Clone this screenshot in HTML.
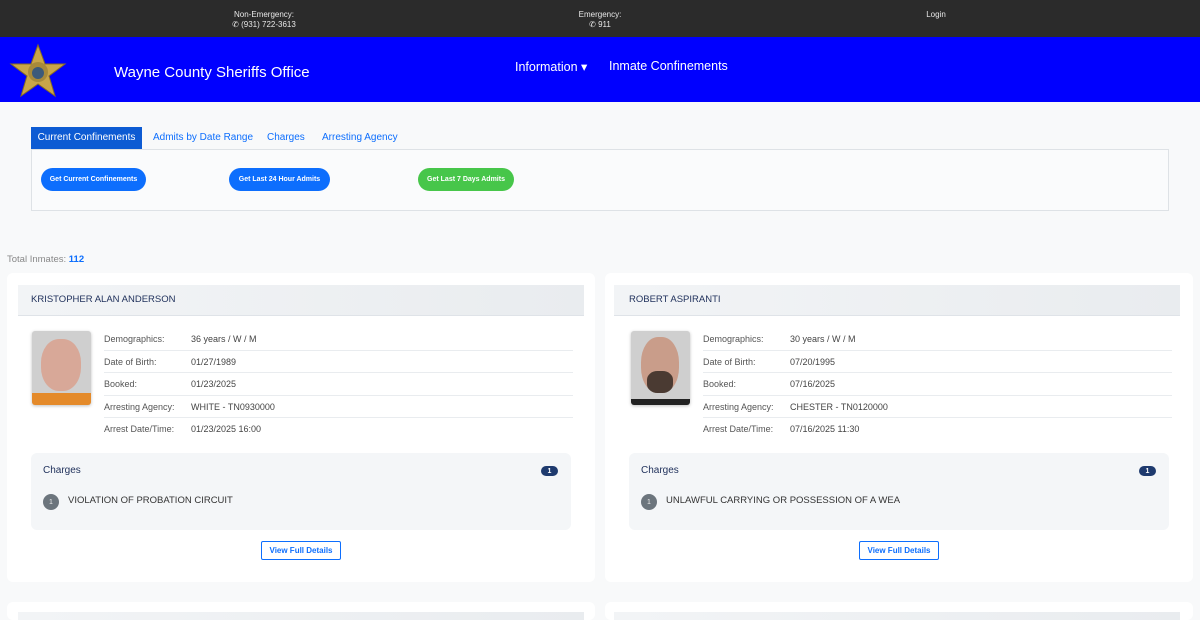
<!DOCTYPE html>
<html><head><meta charset="utf-8"><style>
*{margin:0;padding:0;box-sizing:border-box}
html,body{width:1200px;height:620px;overflow:hidden}
body{background:#f8f9fa;font-family:"Liberation Sans",sans-serif;position:relative}
.a{position:absolute}
.top{left:0;top:0;width:1200px;height:37px;background:#2b2b2b;color:#e8e8e8;font-size:8px;text-align:center;line-height:10px}
.nav{left:0;top:37px;width:1200px;height:65px;background:#0000ff;color:#fff}
.tab{font-size:10px;color:#0d6efd;top:127px;height:22px;line-height:22px}
.pill{top:168px;height:23px;border-radius:12px;color:#fff;font-size:7px;font-weight:bold;display:flex;align-items:center;justify-content:center}
.card{top:273px;width:588px;height:309px;background:#fff;border-radius:6px}
.hd{left:11px;top:12px;width:566px;height:31px;background:linear-gradient(90deg,#f2f4f6,#e9ecef);border-bottom:1px solid #dfe3e8;font-size:9.5px;color:#1e2f5a;line-height:30px;padding-left:13px}
.ph{left:25px;top:58px;width:59px;height:74px;border-radius:3px;box-shadow:0 1px 3px rgba(0,0,0,.25);overflow:hidden;background:#cfcfcf}
.row{left:97px;width:469px;height:22.5px;border-bottom:1px solid #e9ecef;font-size:9px;color:#444;line-height:22px}
.row span{position:absolute;left:0;color:#555}.row b{position:absolute;left:87px;font-weight:normal}
.ch{left:24px;top:180px;width:540px;height:77px;background:#f4f6f8;border-radius:6px}
.bd{left:510px;top:13px;width:17px;height:10px;border-radius:5px;background:#1e3a6e;color:#fff;font-size:7px;font-weight:bold;display:flex;align-items:center;justify-content:center}
.nm{left:12px;top:41px;width:16px;height:16px;border-radius:50%;background:#6c757d;color:#eee;font-size:7px;display:flex;align-items:center;justify-content:center}
.btn{left:254px;top:268px;width:80px;height:19px;border:1px solid #0d6efd;border-radius:2px;background:#fff;color:#0d6efd;font-size:8px;font-weight:bold;display:flex;align-items:center;justify-content:center}
</style></head><body>
<div class="a top">
 <div class="a" style="left:214px;top:10px;width:100px">Non-Emergency:<br>&#9990; (931) 722-3613</div>
 <div class="a" style="left:550px;top:10px;width:100px">Emergency:<br>&#9990; 911</div>
 <div class="a" style="left:906px;top:10px;width:60px">Login</div>
</div>
<div class="a nav">
 <svg class="a" style="left:8px;top:5px" width="60" height="58" viewBox="0 0 60 58"><polygon points="30,3 37,22 57,22 41,34 47,54 30,42 13,54 19,34 3,22 23,22" fill="#c9a54a" stroke="#8a6d22" stroke-width="1"/><circle cx="30" cy="30" r="10" fill="#a88a3a"/><circle cx="30" cy="31" r="6" fill="#3c5a7a"/></svg>
 <div class="a" style="left:114px;top:27px;font-size:15px">Wayne County Sheriffs Office</div>
 <div class="a" style="left:515px;top:22px;font-size:12.5px">Information &#9662;</div>
 <div class="a" style="left:609px;top:22px;font-size:12.5px">Inmate Confinements</div>
</div>
<div class="a" style="left:31px;top:149px;width:1138px;height:62px;border:1px solid #dee2e6;background:#fafbfc"></div>
<div class="a tab" style="left:31px;width:111px;background:#0d5bd3;color:#fff;text-align:center;font-size:10px">Current Confinements</div>
<div class="a tab" style="left:153px">Admits by Date Range</div>
<div class="a tab" style="left:267px">Charges</div>
<div class="a tab" style="left:322px">Arresting Agency</div>
<div class="a pill" style="left:41px;width:105px;background:#0d6efd">Get Current Confinements</div>
<div class="a pill" style="left:229px;width:101px;background:#0d6efd">Get Last 24 Hour Admits</div>
<div class="a pill" style="left:418px;width:96px;background:#47c64a">Get Last 7 Days Admits</div>
<div class="a" style="left:7px;top:254px;font-size:9.5px;color:#888">Total Inmates: <b style="color:#0d6efd">112</b></div>

<div class="a card" style="left:7px">
 <div class="a hd">KRISTOPHER ALAN ANDERSON</div>
 <div class="a ph"><div class="a" style="left:9px;top:8px;width:40px;height:52px;border-radius:45%;background:#d8a898"></div><div class="a" style="left:0;top:62px;width:59px;height:12px;background:#e48a2a"></div></div>
 <div class="a row" style="top:55px"><span>Demographics:</span><b>36 years / W / M</b></div>
 <div class="a row" style="top:77.5px"><span>Date of Birth:</span><b>01/27/1989</b></div>
 <div class="a row" style="top:100px"><span>Booked:</span><b>01/23/2025</b></div>
 <div class="a row" style="top:122.5px"><span>Arresting Agency:</span><b>WHITE - TN0930000</b></div>
 <div class="a row" style="top:145px;border:none"><span>Arrest Date/Time:</span><b>01/23/2025 16:00</b></div>
 <div class="a ch"><div class="a" style="left:12px;top:12px;font-size:10px;color:#1e2f5a">Charges</div><div class="a bd">1</div><div class="a nm">1</div><div class="a" style="left:37px;top:42px;font-size:9.5px;color:#333">VIOLATION OF PROBATION CIRCUIT</div></div>
 <div class="a btn">View Full Details</div>
</div>

<div class="a card" style="left:605px">
 <div class="a hd" style="left:9px;padding-left:15px">ROBERT ASPIRANTI</div>
 <div class="a ph" style="left:26px"><div class="a" style="left:10px;top:6px;width:38px;height:56px;border-radius:45%;background:#c99d8a"></div><div class="a" style="left:16px;top:40px;width:26px;height:22px;border-radius:40%;background:#4a3a32"></div><div class="a" style="left:0;top:68px;width:59px;height:6px;background:#222"></div></div>
 <div class="a row" style="top:55px;left:98px"><span>Demographics:</span><b>30 years / W / M</b></div>
 <div class="a row" style="top:77.5px;left:98px"><span>Date of Birth:</span><b>07/20/1995</b></div>
 <div class="a row" style="top:100px;left:98px"><span>Booked:</span><b>07/16/2025</b></div>
 <div class="a row" style="top:122.5px;left:98px"><span>Arresting Agency:</span><b>CHESTER - TN0120000</b></div>
 <div class="a row" style="top:145px;left:98px;border:none"><span>Arrest Date/Time:</span><b>07/16/2025 11:30</b></div>
 <div class="a ch"><div class="a" style="left:12px;top:12px;font-size:10px;color:#1e2f5a">Charges</div><div class="a bd">1</div><div class="a nm">1</div><div class="a" style="left:37px;top:42px;font-size:9.5px;color:#333">UNLAWFUL CARRYING OR POSSESSION OF A WEA</div></div>
 <div class="a btn">View Full Details</div>
</div>

<div class="a card" style="left:7px;top:602px;height:18px"><div class="a hd" style="top:10px;height:8px;border:none"></div></div>
<div class="a card" style="left:605px;top:602px;height:18px"><div class="a hd" style="left:9px;top:10px;height:8px;border:none"></div></div>
</body></html>
